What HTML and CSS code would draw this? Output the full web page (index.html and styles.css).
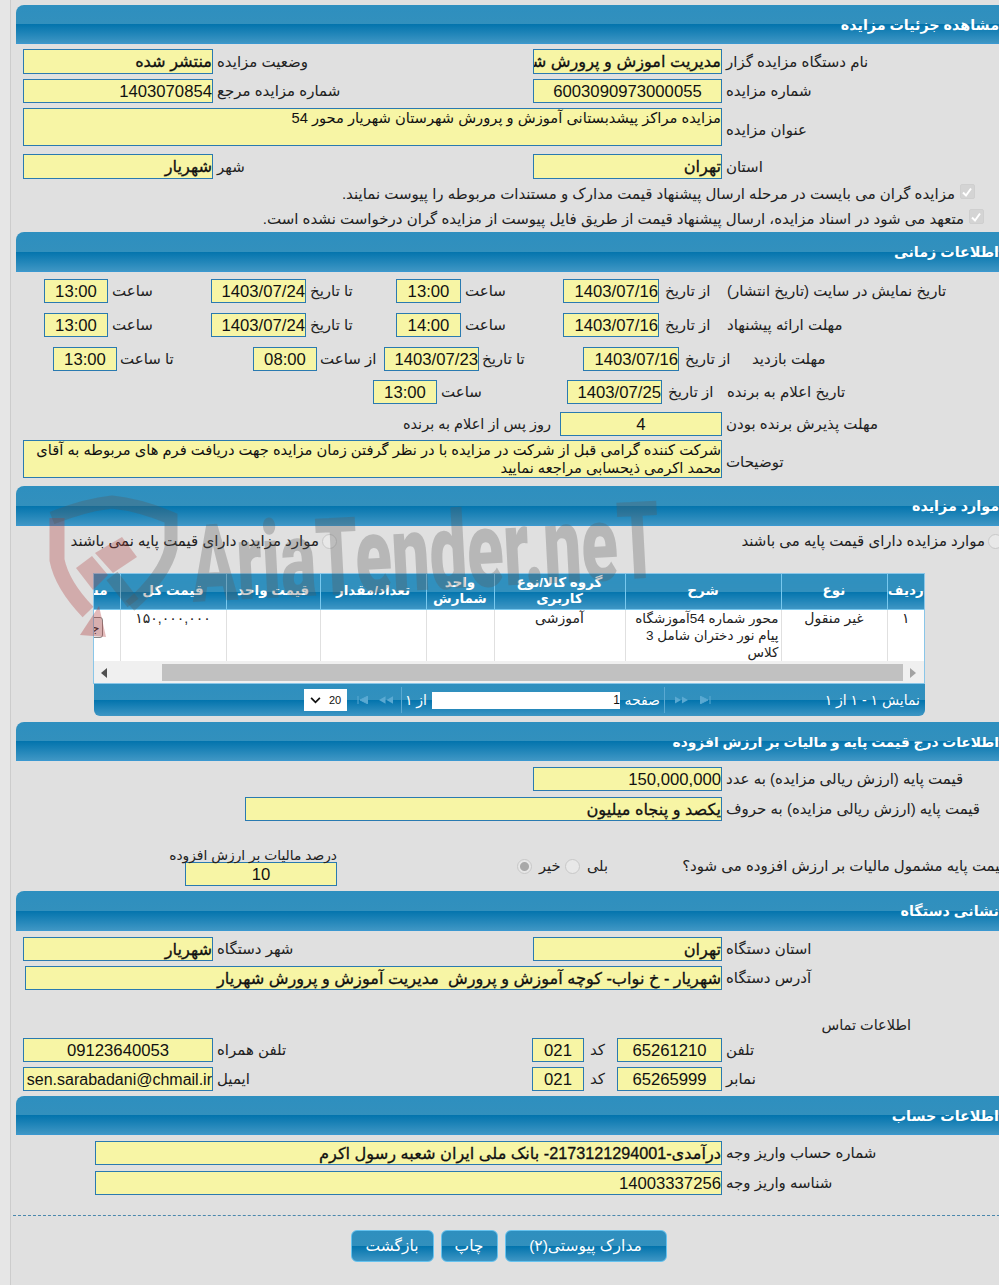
FILE: index.html
```html
<!DOCTYPE html>
<html lang="fa" dir="rtl">
<head>
<meta charset="utf-8">
<title>مشاهده جزئیات مزایده</title>
<link rel="stylesheet" href="styles.css">
</head>
<body>
<div class="page">

<h2 class="head h39">مشاهده جزئیات مزایده</h2>
<div class="sec s1">
  <div class="row std h25 mb5">
    <label>نام دستگاه مزایده گزار</label><div class="f b">مدیریت اموزش و پرورش شهرستان شهریار</div>
    <label>وضعیت مزایده</label><div class="f b">منتشر شده</div>
  </div>
  <div class="row std h24 mb5">
    <label>شماره مزایده</label><div class="f c">6003090973000055</div>
    <label>شماره مزایده مرجع</label><div class="f">1403070854</div>
  </div>
  <div class="row wide h38 mb8">
    <label class="lo">عنوان مزایده</label><div class="f t">مزایده مراکز پیشدبستانی آموزش و پرورش شهرستان شهریار محور 54</div>
  </div>
  <div class="row std h25">
    <label>استان</label><div class="f b">تهران</div>
    <label>شهر</label><div class="f b">شهریار</div>
  </div>
  <div class="chk c1"><span class="box"><svg viewBox="0 0 14 14" width="14" height="14"><path d="M3 7.5 6 10.5 11 3.5" fill="none" stroke="#fff" stroke-width="2"/></svg></span>مزایده گران می بایست در مرحله ارسال پیشنهاد قیمت مدارک و مستندات مربوطه را پیوست نمایند.</div>
  <div class="chk c2"><span class="box"><svg viewBox="0 0 14 14" width="14" height="14"><path d="M3 7.5 6 10.5 11 3.5" fill="none" stroke="#fff" stroke-width="2"/></svg></span>متعهد می شود در اسناد مزایده، ارسال پیشنهاد قیمت از طریق فایل پیوست از مزایده گران درخواست نشده است.</div>
</div>

<h2 class="head h40 hb">اطلاعات زمانی</h2>
<div class="sec s2">
  <div class="row ta h24 mb10">
    <label>تاریخ نمایش در سایت (تاریخ انتشار)</label><label class="p6">از تاریخ</label><div class="f">1403/07/16</div>
    <label>ساعت</label><div class="f c">13:00</div>
    <label>تا تاریخ</label><div class="f">1403/07/24</div>
    <label>ساعت</label><div class="f c">13:00</div>
  </div>
  <div class="row ta h24 mb10">
    <label>مهلت ارائه پیشنهاد</label><label class="p6">از تاریخ</label><div class="f">1403/07/16</div>
    <label>ساعت</label><div class="f c">14:00</div>
    <label>تا تاریخ</label><div class="f">1403/07/24</div>
    <label>ساعت</label><div class="f c">13:00</div>
  </div>
  <div class="row tc h24 mb9">
    <label>مهلت بازدید</label><label class="p6">از تاریخ</label><div class="f">1403/07/16</div>
    <label class="p3">تا تاریخ</label><div class="f">1403/07/23</div>
    <label class="p3">از ساعت</label><div class="f c">08:00</div>
    <label class="p3">تا ساعت</label><div class="f c">13:00</div>
  </div>
  <div class="row td h24 mb8">
    <label>تاریخ اعلام به برنده</label><label class="p6">از تاریخ</label><div class="f">1403/07/25</div>
    <label>ساعت</label><div class="f c">13:00</div>
  </div>
  <div class="row te h24 mb4">
    <label>مهلت پذیرش برنده بودن</label><div class="f c">4</div>
    <span class="after">روز پس از اعلام به برنده</span>
  </div>
  <div class="row wide h38">
    <label class="lo">توضیحات</label><div class="f t">شرکت کننده گرامی قبل از شرکت در مزایده با در نظر گرفتن زمان مزایده جهت دریافت فرم های مربوطه به آقای محمد اکرمی ذیحسابی مراجعه نمایید</div>
  </div>
</div>

<h2 class="head h40 hc">موارد مزایده</h2>
<div class="radios">
  <span class="radio-item first"><i class="radio"></i>موارد مزایده دارای قیمت پایه می باشند</span>
  <span class="radio-item second"><i class="radio"></i>موارد مزایده دارای قیمت پایه نمی باشند</span>
</div>

<div class="grid">
  <div class="gridview">
    <table>
      <colgroup><col class="c37"><col class="c106"><col class="c156"><col class="c131"><col class="c68"><col class="c106"><col class="c94"><col class="c106"><col class="c80"></colgroup>
      <thead>
        <tr><th>ردیف</th><th>نوع</th><th>شرح</th><th>گروه کالا/نوع کاربری</th><th>واحد شمارش</th><th>تعداد/مقدار</th><th>قیمت واحد</th><th>قیمت کل</th><th class="clip">مشاهده</th></tr>
      </thead>
      <tbody>
        <tr><td>۱</td><td>غیر منقول</td><td class="desc">محور شماره 54آموزشگاه پیام نور دختران شامل 3 کلاس</td><td>آموزشی</td><td></td><td></td><td></td><td>۱۵۰,۰۰۰,۰۰۰</td><td class="clip"><span class="detail">جزئیات</span></td></tr>
      </tbody>
    </table>
  </div>
  <div class="scroll">
    <span class="sb-arrow"><svg viewBox="0 0 8 10" width="8" height="10"><path d="M7 0 1 5 7 10Z" fill="#505050"/></svg></span>
    <span class="sb-thumb"></span>
    <span class="sb-arrow"><svg viewBox="0 0 8 10" width="8" height="10"><path d="M1 0 7 5 1 10Z" fill="#a3a3a3"/></svg></span>
  </div>
</div>

<div class="pager">
  <span class="pg-info">نمایش ۱ - ۱ از ۱</span>
  <span class="pg-icons first-icons">
    <svg viewBox="0 0 12 8" width="12" height="8"><path d="M10 0V8M0 0 8 4 0 8Z" fill="#5aa9d2" stroke="#5aa9d2"/></svg>
    <svg viewBox="0 0 15 8" width="13" height="8"><path d="M0 0 7 4 0 8ZM8 0 15 4 8 8Z" fill="#5aa9d2"/></svg>
  </span>
  <span class="pg-sep"></span>
  <span class="pg-label">صفحه</span>
  <span class="pg-input">1</span>
  <span class="pg-of">از ۱</span>
  <span class="pg-sep"></span>
  <span class="pg-icons last-icons">
    <svg viewBox="0 0 15 8" width="14" height="8"><path d="M7 0 0 4 7 8ZM15 0 8 4 15 8Z" fill="#5aa9d2"/></svg>
    <svg viewBox="0 0 12 8" width="12" height="8"><path d="M2 0V8M12 0 4 4 12 8Z" fill="#5aa9d2" stroke="#5aa9d2"/></svg>
  </span>
  <span class="pg-select"><span class="pg-num">20</span><svg viewBox="0 0 12 8" width="11" height="7"><path d="M1 1 6 6 11 1" fill="none" stroke="#111" stroke-width="2"/></svg></span>
</div>

<h2 class="head h39 hd">اطلاعات درج قیمت پایه و مالیات بر ارزش افزوده</h2>
<div class="sec s4">
  <div class="row std h24 mb6">
    <label>قیمت پایه (ارزش ریالی مزایده) به عدد</label><div class="f">150,000,000</div>
  </div>
  <div class="row pw h24">
    <label>قیمت پایه (ارزش ریالی مزایده) به حروف</label><div class="f b">یکصد و پنجاه میلیون</div>
  </div>
  <div class="tax">
    <span class="tax-q">قیمت پایه مشمول مالیات بر ارزش افزوده می شود؟</span>
    <span class="tax-opt yes">بلی<i class="radio"></i></span>
    <span class="tax-opt no">خیر<i class="radio on"></i></span>
    <div class="tax-pct"><span class="tax-l">درصد مالیات بر ارزش افزوده</span><div class="f c pct">10</div></div>
  </div>
</div>

<h2 class="head h40 he">نشانی دستگاه</h2>
<div class="sec s5">
  <div class="row std h24 mb5">
    <label>استان دستگاه</label><div class="f b">تهران</div>
    <label>شهر دستگاه</label><div class="f b">شهریار</div>
  </div>
  <div class="row addr h24">
    <label>آدرس دستگاه</label><div class="f b">شهریار - خ نواب- کوچه آموزش و پرورش&nbsp; مدیریت آموزش و پرورش شهریار</div>
  </div>
  <div class="contact">اطلاعات تماس</div>
  <div class="row ct h24 mb5">
    <label>تلفن</label><div class="f c">65261210</div>
    <label class="p6">کد</label><div class="f c">021</div>
    <label>تلفن همراه</label><div class="f c">09123640053</div>
  </div>
  <div class="row ct h24">
    <label>نمابر</label><div class="f c">65265999</div>
    <label class="p6">کد</label><div class="f c">021</div>
    <label>ایمیل</label><div class="f em">sen.sarabadani@chmail.ir</div>
  </div>
</div>

<h2 class="head h39 hf">اطلاعات حساب</h2>
<div class="sec s6">
  <div class="row acc h24 mb6">
    <label>شماره حساب واریز وجه</label><div class="f b">درآمدی-2173121294001- بانک ملی ایران شعبه رسول اکرم</div>
  </div>
  <div class="row acc h24">
    <label>شناسه واریز وجه</label><div class="f">14003337256</div>
  </div>
</div>

<div class="rule"></div>
<div class="actions">
  <button class="btn b1">مدارک پیوستی(۲)</button>
  <button class="btn b2">چاپ</button>
  <button class="btn b3">بازگشت</button>
</div>

<div class="mark" aria-hidden="true">
  <svg class="shield" viewBox="45 495 135 150" width="135" height="150">
    <path d="M57 518 57 560Q62 585 88 612" fill="none" stroke="#b03a3a" stroke-width="15" stroke-opacity=".32"/>
    <path d="M80 635 106 637 99 606Z" fill="#b03a3a" fill-opacity=".35"/>
    <path d="M76 568 92 556 108 575 93 590ZM95 553 122 537 137 557 113 573Z" fill="#b03a3a" fill-opacity=".3"/>
    <path d="M112 576 133 603" fill="none" stroke="#555" stroke-width="14" stroke-opacity=".3"/>
    <path d="M52 518Q85 505 112 502Q140 505 171 518L171 548Q165 575 130 606" fill="none" stroke="#555" stroke-width="13" stroke-opacity=".3"/>
  </svg>
  <span class="mark-text">AriaTender.neT</span>
</div>

</div>
</body>
</html>
```

FILE: styles.css
```css
* { box-sizing: border-box; }
html, body { margin: 0; padding: 0; height: 1285px; overflow: hidden; }
body {
  background: #e6e6e6;
  font-family: "Liberation Sans", "DejaVu Sans", sans-serif;
  font-size: 15px;
  color: #222;
  direction: rtl;
}
.page {
  position: relative;
  direction: rtl;
  width: 995px;
  height: 1285px;
  margin-left: 10px;
  margin-right: 0;
  padding: 5px 0 0 5px;
  border-left: 1px solid #ccc;
  background: #e0e0e0;
  float: left;
}

/* section headers */
.head {
  margin: 0;
  padding: 1px 6px 0 0;
  background: linear-gradient(to bottom, #2e8fbf 0, #3290bd 50%, #0374ad 51%, #3e96c4 100%);
  border-radius: 8px 0 0 0;
  border-bottom: 1px solid #3a98d0;
  color: #fff;
  font-size: 14.3px;
  font-weight: bold;
  display: flex;
  align-items: center;
}
.h39 { height: 39px; }
.h40 { height: 40px; }
.hd { margin-top: 6px; font-size: 13.8px; }

/* sections */
.sec { padding-left: 7px; }
.s1 { padding-top: 5px; height: 188px; }
.s2 { padding-top: 7px; height: 214px; }
.s4 { padding-top: 6px; height: 130px; }
.s5 { padding-top: 6px; height: 165px; }
.s6 { padding-top: 6px; }

.row { display: grid; align-items: stretch; }
.h24 { height: 24px; }
.h25 { height: 25px; }
.h38 { height: 38px; }
.mb4 { margin-bottom: 4px; }
.mb5 { margin-bottom: 5px; }
.mb6 { margin-bottom: 6px; }
.mb8 { margin-bottom: 8px; }
.mb9 { margin-bottom: 9px; }
.mb10 { margin-bottom: 10px; }

.std { grid-template-columns: 283px 189px 320px 190px; }
.wide { grid-template-columns: 283px 699px; }
.ta { grid-template-columns: 282px 64px 96px 102px 65px 90px 95px 103px 64px; }
.tc { grid-template-columns: 257px 69px 96px 104px 95px 67px 64px 136px 64px; }
.td { grid-template-columns: 282px 61px 95px 130px 64px; }
.te { grid-template-columns: 283px 162px 170px; }
.pw { grid-template-columns: 283px 477px; }
.addr { grid-template-columns: 283px 697px; }
.ct { grid-template-columns: 283px 105px 33px 52px 319px 190px; }
.acc { grid-template-columns: 283px 627px; }

label {
  display: flex;
  align-items: center;
  justify-content: flex-end;
  padding-left: 4px;
  white-space: nowrap;
  font-size: 15px;
}
.lo { padding-top: 6px; }
.p6 { padding-left: 6px; }
.p3 { padding-left: 3px; }
.after { padding-right: 9px; display: flex; align-items: center; white-space: nowrap; font-size: 14.5px; }

.f {
  background: #f7f5a5;
  border: 1px solid #2a7ab0;
  color: #111;
  font-size: 16.7px;
  line-height: 23px;
  white-space: nowrap;
  overflow: hidden;
  text-align: right;
  min-width: 0;
}
.f.b { font-size: 16.2px; -webkit-text-stroke: .3px #111; }
.f.c { text-align: center; }
.f.t { white-space: normal; font-size: 14.7px; line-height: 18px; }
.f.em { font-size: 16px; }

/* checkboxes */
.chk {
  display: flex;
  align-items: center;
  height: 26px;
  white-space: nowrap;
  font-size: 15px;
}
.c1 { padding-right: 30px; margin-top: 2px; }
.c2 { padding-right: 21px; height: 24px; }
.box {
  width: 15px;
  height: 15px;
  margin: -5px 0 0 5px;
  background: #d4d4d4;
  border: 1px solid #cfcfcf;
  border-radius: 2px;
  flex: none;
}
.box svg { display: block; }

/* radios */
.radios { height: 47px; position: relative; padding-top: 4px; display: flex; }
.radio-item { display: flex; align-items: center; height: 22px; white-space: nowrap; }
.first { width: 675px; padding-right: 9px; margin-right: -7px; flex: none; }
.second { flex: none; }
.radio {
  display: inline-block;
  width: 15px;
  height: 15px;
  border: 1px solid #c8c8c8;
  border-radius: 50%;
  background: #e8e8e8;
  flex: none;
}
.radio-item .radio { margin-left: 3px; }
.radio.on { background: radial-gradient(circle, #a8a8a8 0 4px, #e6e6e6 5px); }

/* grid */
.grid {
  width: 832px;
  margin-right: 80px;
  border: 1px solid #8ac6e8;
  background: #f0f0f0;
  height: 111px;
}
.gridview { overflow: hidden; height: 87px; background: #fff; }
table { width: 884px; table-layout: fixed; border-collapse: collapse; }
.c37 { width: 37px; } .c106 { width: 106px; } .c156 { width: 156px; } .c131 { width: 131px; }
.c68 { width: 68px; } .c94 { width: 94px; } .c80 { width: 80px; }
th {
  height: 35px;
  padding: 0 2px;
  background: linear-gradient(to bottom, #2e8fbf 0, #3290bd 50%, #0374ad 51%, #3e96c4 100%);
  border-left: 1px solid #78c8ee;
  border-bottom: 1px solid #78c8ee;
  color: #fff;
  font-size: 13.5px;
  line-height: 16px;
  font-weight: bold;
  text-align: center;
}
th:first-child { padding: 0; }
th.clip { text-align: right; padding: 0 12px 0 0; overflow: hidden; white-space: nowrap; }
td {
  height: 51px;
  padding: 0 2px;
  vertical-align: top;
  text-align: center;
  font-size: 14px;
  line-height: 17px;
  border-left: 1px solid #e0e0e0;
  border-bottom: 1px solid #e0e0e0;
  background: #fff;
  color: #222;
}
td.desc { text-align: right; font-size: 13.5px; }
td.clip { padding: 7px 0 0 0; overflow: hidden; white-space: nowrap; text-align: left; }
.detail {
  display: inline-block;
  width: 62px;
  height: 21px;
  border: 1px solid #888;
  border-radius: 3px;
  background: #eee;
  font-size: 13px;
  line-height: 19px;
  text-align: right;
  padding-right: 2px;
}
.scroll { display: flex; height: 22px; align-items: center; direction: ltr; padding-top: 1px; }
.sb-arrow { width: 20px; display: flex; justify-content: center; flex: none; }
.sb-thumb { display: block; height: 17px; width: 741px; background: #c1c1c1; margin-left: 48px; flex: none; }

/* pager */
.pager {
  width: 831px;
  margin: 0 80px 0 0;
  height: 32px;
  background: linear-gradient(to bottom, #2e8fbf 0, #3290bd 50%, #0374ad 51%, #3e96c4 100%);
  border-radius: 0 0 6px 6px;
  display: flex;
  align-items: center;
  color: #fff;
  font-size: 14px;
  white-space: nowrap;
}
.pg-info { width: 210px; padding-right: 5px; flex: none; }
.pg-icons { display: flex; align-items: center; gap: 12px; flex: none; }
.first-icons { width: 50px; padding-right: 3px; }
.pg-sep { width: 1px; height: 26px; background: #5aa9d2; flex: none; }
.pg-label { width: 44px; padding-right: 4px; flex: none; }
.pg-input {
  width: 188px;
  height: 17px;
  background: #fff;
  color: #111;
  font-size: 12px;
  line-height: 17px;
  flex: none;
}
.pg-of { width: 30px; padding-right: 5px; flex: none; }
.last-icons { width: 52px; padding-right: 8px; gap: 11px; }
.pg-select {
  width: 43px;
  height: 22px;
  margin-right: 2px;
  background: #fff;
  display: flex;
  align-items: center;
  gap: 8px;
  justify-content: center;
  color: #111;
  font-size: 11px;
  flex: none;
}

/* tax row */
.tax { position: relative; height: 70px; display: flex; }
.tax-q { position: absolute; right: -2px; top: 36px; white-space: nowrap; font-size: 15px; }
.tax-opt { position: absolute; top: 37px; display: flex; align-items: center; gap: 7px; font-size: 14.5px; }
.yes { left: 542px; }
.no { left: 494px; }
.tax-pct { position: absolute; left: 162px; top: 23px; width: 152px; }
.tax-l { position: absolute; right: 0; top: 3px; white-space: nowrap; font-size: 13.8px; }
.pct { margin-top: 18px; height: 24px; }

/* contact */
.contact { height: 48px; padding: 27px 94px 0 0; font-size: 14.5px; }

/* actions */
.rule { margin: 20px 0 0 -3px; border-top: 1px dashed #4a88ad; }
.actions { display: flex; justify-content: center; gap: 7px; margin-top: 14px; padding-right: 4px; }
.btn {
  height: 32px;
  border: 1px solid #66c2ee;
  border-radius: 6px;
  background: linear-gradient(to bottom, #2e8fbf 0, #3290bd 50%, #0374ad 51%, #3e96c4 100%);
  color: #fff;
  font-family: "Liberation Sans", "DejaVu Sans", sans-serif;
  font-size: 15.5px;
  padding: 0;
}
.b1 { width: 162px; }
.b2 { width: 57px; }
.b3 { width: 83px; }

/* watermark */
.mark { position: absolute; left: 0; top: 0; width: 700px; height: 660px; pointer-events: none; direction: ltr; }
.shield { position: absolute; left: 34px; top: 495px; }
.mark-text {
  position: absolute;
  left: 180px;
  top: 505px;
  font-family: "Roboto", "Liberation Sans", sans-serif;
  font-weight: 900;
  font-size: 108px;
  line-height: 120px;
  color: rgba(90, 90, 90, .3);
  white-space: nowrap;
  transform: rotate(-3deg) scaleX(.62);
  transform-origin: left center;
}
```
